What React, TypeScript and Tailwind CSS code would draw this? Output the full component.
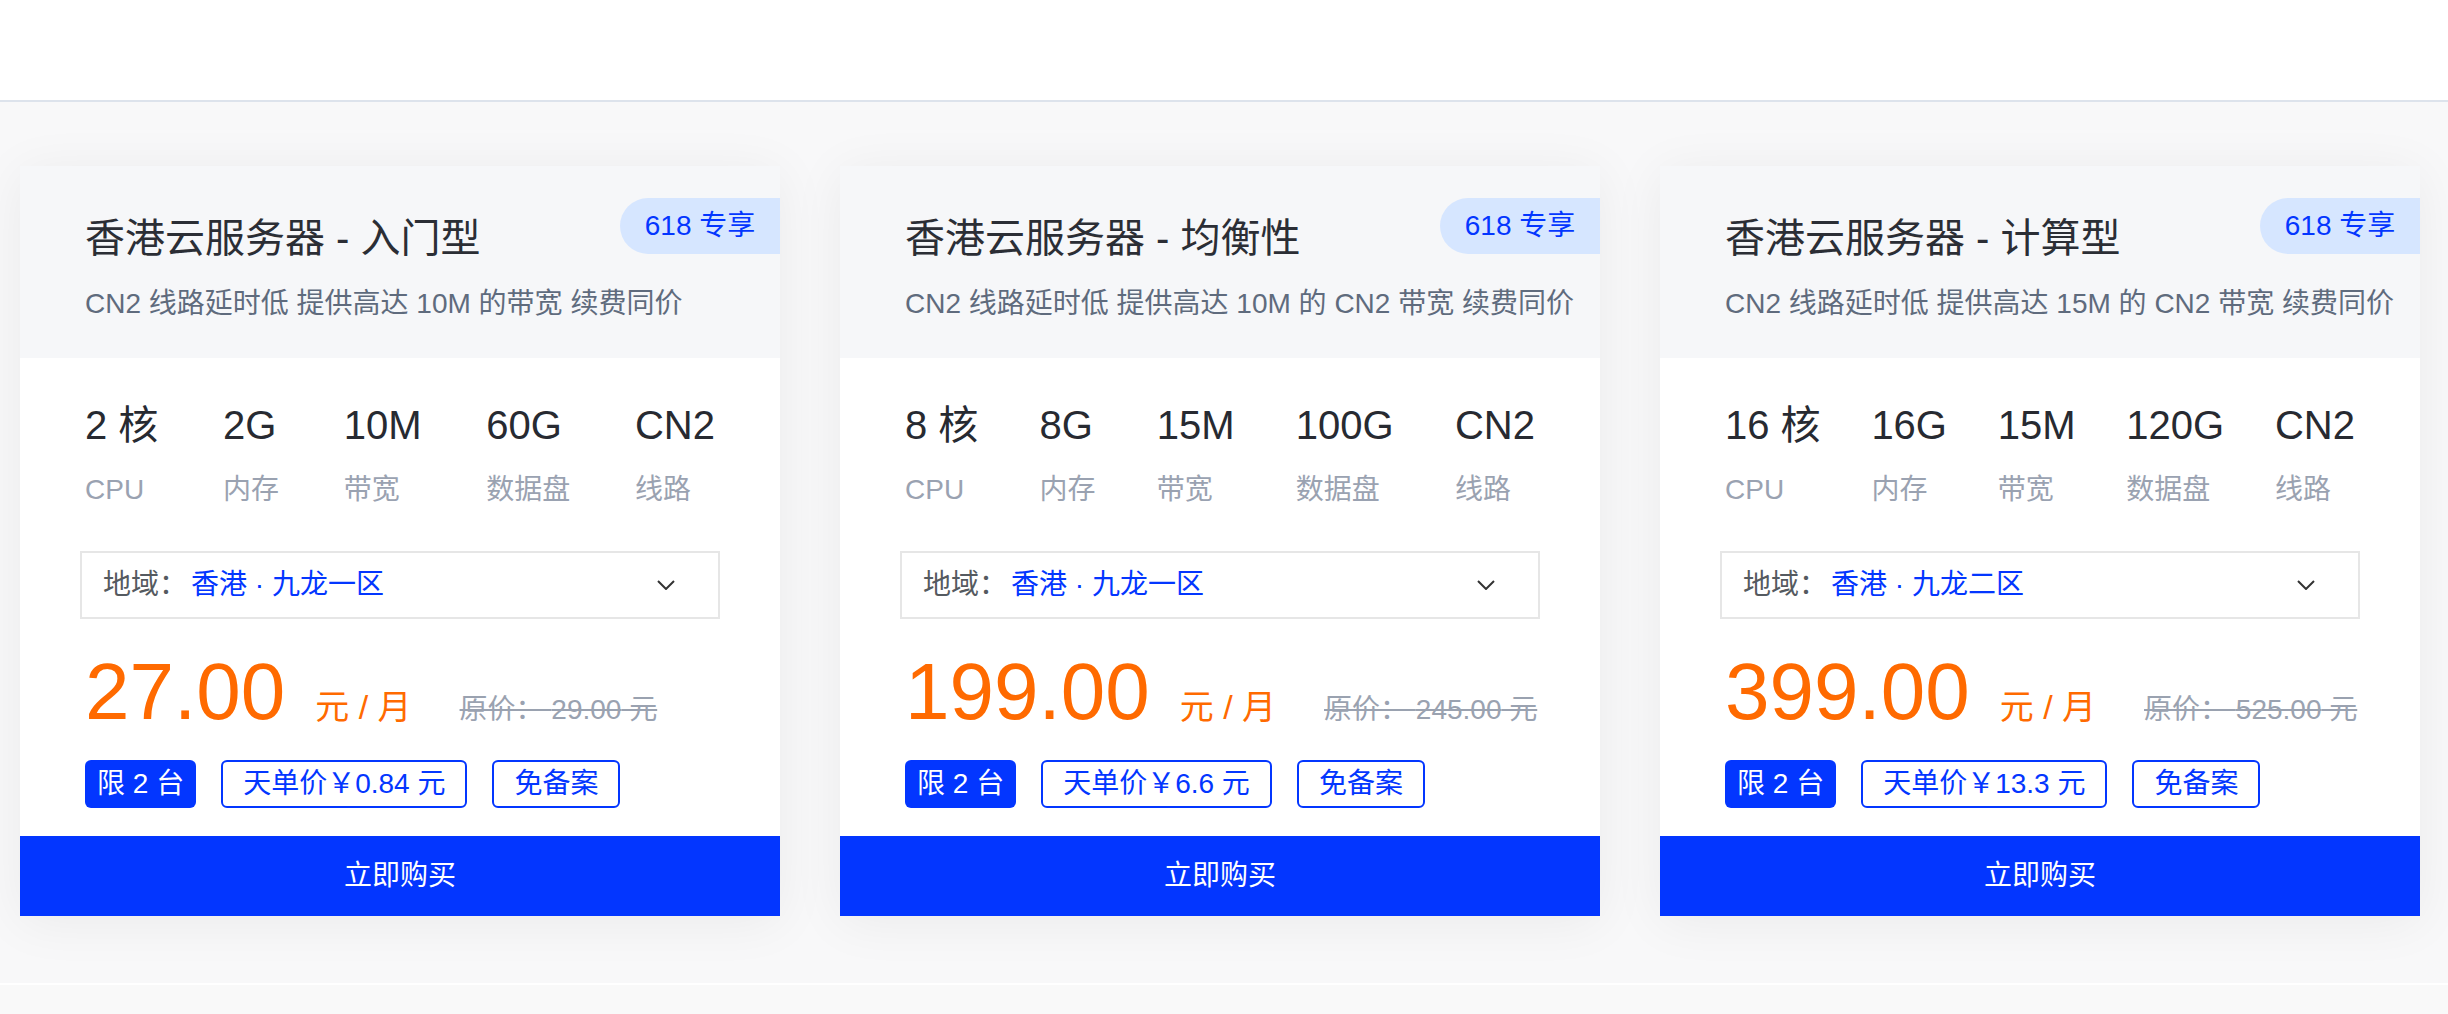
import React from 'react';

type Plan = {
  name: string;
  desc: string;
  specs: { value: string; label: string }[];
  region: string;
  price: string;
  original: string;
  daily: string;
};

const plans: Plan[] = [
  {
    name: '香港云服务器 - 入门型',
    desc: 'CN2 线路延时低 提供高达 10M 的带宽 续费同价',
    specs: [
      { value: '2 核', label: 'CPU' },
      { value: '2G', label: '内存' },
      { value: '10M', label: '带宽' },
      { value: '60G', label: '数据盘' },
      { value: 'CN2', label: '线路' },
    ],
    region: '香港 · 九龙一区',
    price: '27.00',
    original: '29.00',
    daily: '0.84',
  },
  {
    name: '香港云服务器 - 均衡性',
    desc: 'CN2 线路延时低 提供高达 10M 的 CN2 带宽 续费同价',
    specs: [
      { value: '8 核', label: 'CPU' },
      { value: '8G', label: '内存' },
      { value: '15M', label: '带宽' },
      { value: '100G', label: '数据盘' },
      { value: 'CN2', label: '线路' },
    ],
    region: '香港 · 九龙一区',
    price: '199.00',
    original: '245.00',
    daily: '6.6',
  },
  {
    name: '香港云服务器 - 计算型',
    desc: 'CN2 线路延时低 提供高达 15M 的 CN2 带宽 续费同价',
    specs: [
      { value: '16 核', label: 'CPU' },
      { value: '16G', label: '内存' },
      { value: '15M', label: '带宽' },
      { value: '120G', label: '数据盘' },
      { value: 'CN2', label: '线路' },
    ],
    region: '香港 · 九龙二区',
    price: '399.00',
    original: '525.00',
    daily: '13.3',
  },
];

function PlanCard({ plan }: { plan: Plan }) {
  return (
    <div className="w-[760px] bg-white shadow-[0_6px_50px_rgba(0,0,0,0.06)]">
      {/* header */}
      <div className="relative h-[192px] whitespace-nowrap bg-[#f6f7f9] pl-[65px] pt-[44px]">
        <div className="text-[40px] leading-[56px] text-[#2b2e35]">{plan.name}</div>
        <div className="mt-[18px] text-[28px] leading-[40px] text-[#5f6b7d]">{plan.desc}</div>
        <div className="absolute right-0 top-[32px] flex h-[56px] w-[160px] items-center justify-center rounded-l-full bg-[#d6e6ff] text-[28px] text-[#0336ff]">
          618 专享
        </div>
      </div>

      {/* body */}
      <div className="whitespace-nowrap px-[60px] pt-[39px]">
        <div className="flex justify-between px-[5px]">
          {plan.specs.map(s => (
            <div key={s.label} className="flex flex-col">
              <span className="text-[40px] leading-[56px] text-[#272a31]">{s.value}</span>
              <span className="mt-[17px] text-[28px] leading-[40px] text-[#9aa2b1]">{s.label}</span>
            </div>
          ))}
        </div>

        <div className="mt-[41px] flex h-[68px] items-center border-2 border-[#e6e6e6] pl-[21px] pr-[43px] text-[28px]">
          <span className="text-[#555a60]">地域：</span>
          <span className="ml-[4px] text-[#0336ff]">{plan.region}</span>
          <svg className="ml-auto" width="18" height="10" viewBox="0 0 18 10" fill="none">
            <polyline points="1,1 9,9 17,1" stroke="#333" strokeWidth="2" />
          </svg>
        </div>

        <div className="mt-[33px] flex h-[80px] items-baseline px-[5px]">
          <span className="text-[80px] leading-[80px] text-[#ff6a00]">{plan.price}</span>
          <span className="ml-[30px] text-[34px] text-[#ff6a00]">元 / 月</span>
          <span className="ml-[48px] text-[28px] text-[#9aa2b0] line-through">原价： {plan.original} 元</span>
        </div>

        <div className="mt-[28px] flex gap-[25px] px-[5px] text-[28px]">
          <span className="flex h-[48px] items-center rounded-[6px] bg-[#0336ff] px-[12px] text-white">限 2 台</span>
          <span className="flex h-[48px] items-center rounded-[6px] border-2 border-[#0336ff] px-[20px] text-[#0336ff]">
            天单价￥{plan.daily} 元
          </span>
          <span className="flex h-[48px] items-center rounded-[6px] border-2 border-[#0336ff] px-[20px] text-[#0336ff]">免备案</span>
        </div>
      </div>

      <button className="mt-[28px] flex h-[80px] w-full items-center justify-center bg-[#0336ff] text-[28px] text-white">
        立即购买
      </button>
    </div>
  );
}

export default function App() {
  return (
    <div className="flex min-h-screen flex-col bg-white font-['Liberation_Sans','Noto_Sans_CJK_SC',sans-serif]">
      <div className="h-[102px] border-b-2 border-[#dde3ec] bg-white" />
      <div className="flex items-start gap-[60px] bg-[#f8f8f9] px-[20px] pb-[67px] pt-[64px]">
        {plans.map(p => (
          <PlanCard key={p.name} plan={p} />
        ))}
      </div>
      <div className="flex-1 border-t-2 border-white bg-[#f9f9f9]" />
    </div>
  );
}
